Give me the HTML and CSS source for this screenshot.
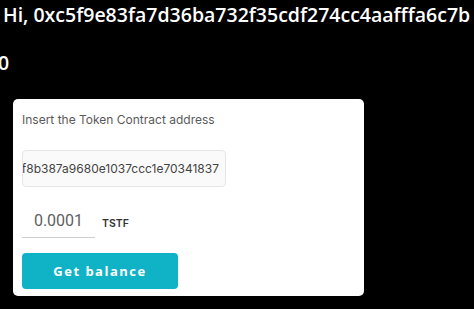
FILE: index.html
```html
<!DOCTYPE html>
<html>
<head>
  <link rel="stylesheet" href="styles.css">
</head>
<body>
  <div class="page">
    <h2 class="greeting">Hi, 0xc5f9e83fa7d36ba732f35cdf274cc4aafffa6c7b</h2>
    <h2 class="balance">0</h2>

    <div class="card">
      <div class="label">Insert the Token Contract address</div>
      <div class="address-box">
        <span class="address">f8b387a9680e1037ccc1e70341837</span>
      </div>

      <div class="amount-row">
        <div class="amount">0.0001</div>
        <span class="symbol">TSTF</span>
      </div>

      <button class="button">Get balance</button>
    </div>
  </div>
</body>
</html>
```

FILE: styles.css
```css
* {
  margin: 0;
  padding: 0;
  box-sizing: border-box;
}

body {
  background: #000;
  color: #fff;
  font-family: "Open Sans", "Noto Sans", sans-serif;
  overflow: hidden;
}

.page {
  padding: 2px 0 0 3px;
}

.greeting {
  font-size: 19.5px;
  font-weight: 600;
  line-height: 26px;
  white-space: nowrap;
}

.balance {
  font-size: 19.5px;
  font-weight: 600;
  line-height: 26px;
  margin: 22px 0 0 -5px;
}

.card {
  width: 351px;
  margin: 23px 0 0 10px;
  background: #fff;
  border-radius: 5px;
  padding: 13px 9px 7px 9px;
  color: #555;
  font-family: Inter, Roboto, sans-serif;
}

.label {
  font-size: 12px;
  color: #5a5a5a;
  line-height: 16px;
}

.address-box {
  width: 204px;
  height: 37px;
  margin-top: 22px;
  border: 1px solid #e6e6e6;
  border-radius: 4px;
  background: #fafafa;
  display: flex;
  align-items: center;
  justify-content: flex-end;
  padding: 0 6px;
  overflow: hidden;
}

.address {
  font-size: 12px;
  color: #444;
  white-space: nowrap;
}

.amount-row {
  display: flex;
  align-items: center;
  gap: 7px;
  margin-top: 17px;
}

.amount {
  width: 73px;
  height: 34px;
  border-bottom: 1px solid #cfcfcf;
  display: flex;
  align-items: center;
  justify-content: center;
  font-size: 16px;
  color: #5f5f5f;
  font-family: Roboto, sans-serif;
}

.symbol {
  font-size: 10.5px;
  font-weight: 600;
  color: #333;
  margin-top: 4px;
}

.button {
  width: 156px;
  height: 36px;
  margin-top: 15px;
  border: none;
  border-radius: 4px;
  background: #10b3c6;
  color: #fff;
  font-family: "Open Sans", sans-serif;
  font-size: 13px;
  font-weight: 700;
  letter-spacing: 1.5px;
  cursor: pointer;
}
```
